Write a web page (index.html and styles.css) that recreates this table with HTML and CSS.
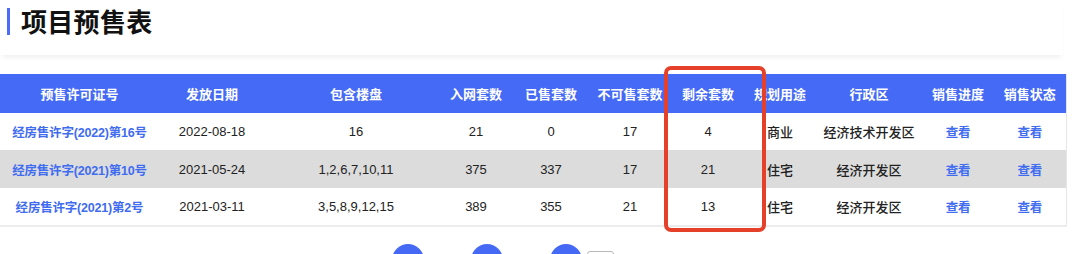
FILE: index.html
```html
<!DOCTYPE html>
<html lang="zh">
<head>
<meta charset="utf-8">
<link rel="stylesheet" href="styles.css">
</head>
<body>
<div class="page">
  <div class="card-head">
    <span class="bar"></span>
    <h1 class="title">项目预售表</h1>
  </div>
  <div class="table-wrap">
    <table class="presale">
      <colgroup>
        <col style="width:159px"><col style="width:106px"><col style="width:182px"><col style="width:58px"><col style="width:92px"><col style="width:66px"><col style="width:90px"><col style="width:54px"><col style="width:124px"><col style="width:54px"><col style="width:81px">
      </colgroup>
      <thead>
        <tr>
          <th>预售许可证号</th><th>发放日期</th><th>包含楼盘</th><th>入网套数</th><th>已售套数</th><th>不可售套数</th><th>剩余套数</th><th>规划用途</th><th>行政区</th><th>销售进度</th><th class="last">销售状态</th>
        </tr>
      </thead>
      <tbody>
        <tr class="r1">
          <td><a class="link">经房售许字(2022)第16号</a></td><td>2022-08-18</td><td>16</td><td>21</td><td>0</td><td>17</td><td>4</td><td>商业</td><td>经济技术开发区</td><td><a class="link">查看</a></td><td class="last"><a class="link">查看</a></td>
        </tr>
        <tr class="r2 gray">
          <td><a class="link">经房售许字(2021)第10号</a></td><td>2021-05-24</td><td>1,2,6,7,10,11</td><td>375</td><td>337</td><td>17</td><td>21</td><td>住宅</td><td>经济开发区</td><td><a class="link">查看</a></td><td class="last"><a class="link">查看</a></td>
        </tr>
        <tr class="r3">
          <td><a class="link">经房售许字(2021)第2号</a></td><td>2021-03-11</td><td>3,5,8,9,12,15</td><td>389</td><td>355</td><td>21</td><td>13</td><td>住宅</td><td>经济开发区</td><td><a class="link">查看</a></td><td class="last"><a class="link">查看</a></td>
        </tr>
      </tbody>
    </table>
    <div class="highlight"></div>
  </div>
  <div class="pager">
    <span class="dot"></span>
    <span class="dot"></span>
    <span class="dot"></span>
    <span class="box"></span>
  </div>
</div>
</body>
</html>
```

FILE: styles.css
```css
html, body {
  margin: 0;
  padding: 0;
  background: #ffffff;
}
.page {
  width: 1080px;
  height: 254px;
  overflow: hidden;
  font-family: "Liberation Sans", "Noto Sans CJK SC", sans-serif;
  color: #222;
}
.card-head {
  width: 1063px;
  height: 55px;
  display: flex;
  align-items: flex-start;
  padding-left: 7px;
  box-sizing: border-box;
  background: #fff;
  box-shadow: 0 4px 5px -2px rgba(0, 0, 0, 0.07);
}
.bar {
  width: 3px;
  height: 27px;
  margin-top: 8px;
  background: #4a6cf7;
}
.title {
  margin: 6px 0 0 11px;
  font-size: 26px;
  line-height: 34px;
  font-weight: 700;
  color: #111;
  letter-spacing: 0.3px;
}
.table-wrap {
  position: relative;
  margin-top: 19px;
}
.presale {
  border-collapse: collapse;
  table-layout: fixed;
  width: 1066px;
  font-size: 13px;
}
.presale th {
  background: #456af5;
  color: #fff;
  font-weight: 700;
  height: 39px;
  padding: 0;
  text-align: center;
  white-space: nowrap;
}
.presale td {
  padding: 0;
  text-align: center;
  white-space: nowrap;
  font-weight: 500;
  color: #222;
}
.presale td:last-child, .presale th:last-child {
  border-right: 1px solid #e6e6e6;
}
.presale .last {
  padding-left: 9px;
}
.r1 td { height: 37px; }
.r2 td { height: 38px; }
.r3 td { height: 37px; border-bottom: 2px solid #ececec; }
.gray td { background: #dcdcdc; }
.link {
  color: #3f6cf0;
  font-weight: 600;
  font-size: 12.5px;
  letter-spacing: -0.2px;
}
.highlight {
  position: absolute;
  left: 664px;
  top: -8px;
  width: 102px;
  height: 166px;
  box-sizing: border-box;
  border: 4px solid #e5412a;
  border-radius: 7px;
}
.pager {
  display: flex;
  align-items: flex-start;
  margin-top: 17px;
  padding-left: 392px;
}
.dot {
  width: 32px;
  height: 32px;
  border-radius: 50%;
  background: #4569f4;
  margin-right: 47px;
}
.dot:nth-child(3) {
  margin-right: 5px;
}
.box {
  width: 27px;
  height: 20px;
  margin-top: 7px;
  box-sizing: border-box;
  border: 1px solid #b8b8b8;
  border-radius: 3px;
  background: #fff;
}
```
